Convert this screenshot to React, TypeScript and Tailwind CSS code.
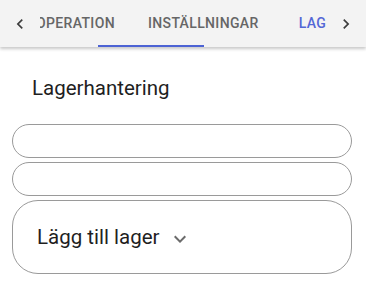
import React from "react";

const ArrowLeft = () => (
	<svg width="20" height="20" viewBox="0 0 24 24" fill="#3d3d3d">
		<path d="M15.41 16.59 10.83 12l4.58-4.59L14 6l-6 6 6 6z" />
	</svg>
);

const ArrowRight = () => (
	<svg width="20" height="20" viewBox="0 0 24 24" fill="#3d3d3d">
		<path d="M8.59 16.59 13.17 12 8.59 7.41 10 6l6 6-6 6z" />
	</svg>
);

const ExpandMore = () => (
	<svg width="24" height="24" viewBox="0 0 24 24" fill="#6b6b6b">
		<path d="M16.59 8.59 12 13.17 7.41 8.59 6 10l6 6 6-6z" />
	</svg>
);

const App = () => {
	return (
		<div className="w-[366px] h-[286px] bg-white overflow-hidden font-['Roboto',sans-serif]">
			{/* tab bar */}
			<div className="relative z-10 h-[47px] bg-[#f3f3f3] flex items-center shadow-[0_2px_3px_rgba(0,0,0,0.22)]">
				<div className="w-10 h-full flex items-center justify-center shrink-0">
					<ArrowLeft />
				</div>
				<div className="flex-1 h-full overflow-hidden flex items-center">
					<div className="flex items-center ml-[-4px] whitespace-nowrap text-[14px] font-medium tracking-[0.025em] uppercase">
						<span className="text-[#666]">Operation</span>
						<span className="ml-[33px] text-[#666]">Inställningar</span>
						<span className="ml-[40px] text-[#5367d6]">Lager</span>
					</div>
				</div>
				<div className="w-10 h-full flex items-center justify-center shrink-0">
					<ArrowRight />
				</div>
				<div className="absolute left-[98px] bottom-0 w-[106px] h-[2px] bg-[#4d63d4]" />
			</div>

			{/* body */}
			<div className="pl-3 pr-[14px]">
				<h2 className="pl-5 mt-[27px] text-[20.5px] leading-[28px] font-normal text-[#1f1f1f]">Lagerhantering</h2>
				<div className="mt-[22px] flex flex-col gap-1">
					<div className="h-[34px] rounded-full border border-[#9a9a9a]" />
					<div className="h-[34px] rounded-full border border-[#9a9a9a]" />
					<div className="h-[74px] rounded-[26px] border border-[#9a9a9a] flex items-center pl-6">
						<span className="text-[20.5px] font-normal text-[#1f1f1f]">Lägg till lager</span>
						<span className="ml-2 mt-[3px] flex">
							<ExpandMore />
						</span>
					</div>
				</div>
			</div>
		</div>
	);
};

export default App;
